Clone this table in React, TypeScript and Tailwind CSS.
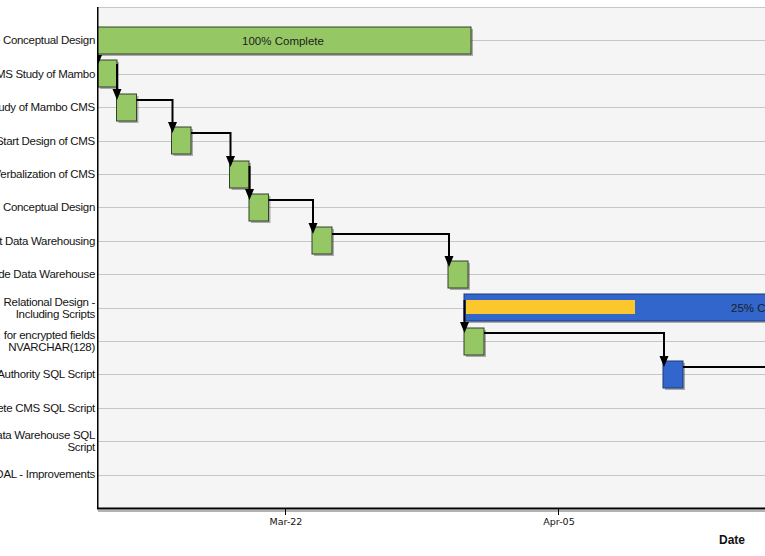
import React from 'react'

// row centres sit on the horizontal gridlines: top 7, pitch 33.4
const TOP = 7
const PITCH = 33.4
const rowY = (i: number) => TOP + PITCH * (i + 1)

const LABELS: string[][] = [
  ['Complete Conceptual Design'],
  ['CMS Study of Mambo'],
  ['Case Study of Mambo CMS'],
  ['Start Design of CMS'],
  ['Verbalization of CMS'],
  ['Finish Conceptual Design'],
  ['Start Data Warehousing'],
  ['Include Data Warehouse'],
  ['Relational Design -', 'Including Scripts'],
  ['for encrypted fields', 'NVARCHAR(128)'],
  ['Create Authority SQL Script'],
  ['Complete CMS SQL Script'],
  ['Create Data Warehouse SQL', 'Script'],
  ['Build DAL - Improvements'],
]

type Task = { row: number; x: number; w: number; color: 'green' | 'blue' }

const TASKS: Task[] = [
  { row: 0, x: 97.5, w: 373.5, color: 'green' },
  { row: 1, x: 98, w: 19, color: 'green' },
  { row: 2, x: 116.5, w: 20, color: 'green' },
  { row: 3, x: 171.5, w: 19.5, color: 'green' },
  { row: 4, x: 229.5, w: 19.5, color: 'green' },
  { row: 5, x: 249, w: 19.5, color: 'green' },
  { row: 6, x: 312, w: 20, color: 'green' },
  { row: 7, x: 448, w: 20, color: 'green' },
  { row: 8, x: 464, w: 640, color: 'blue' },
  { row: 9, x: 464, w: 20, color: 'green' },
  { row: 10, x: 663, w: 20, color: 'blue' },
]

const FILL = { green: '#95c865', blue: '#3366cc' }
const EDGE = { green: '#34412b', blue: '#1f3a78' }

// finish-to-start links: [from x, line y, to x, tip y]; a vertical-only link has from x == to x
const LINKS: [number, number, number, number][] = [
  [97.5, 54, 97.5, 66],
  [117, 64, 117, 100],
  [136.5, 100, 172.5, 133],
  [191, 133, 230.5, 167],
  [249.5, 166, 249.5, 200],
  [268.5, 200, 313, 234],
  [332, 234, 449, 267],
  [464.5, 300, 464.5, 333],
  [484, 333, 664, 367],
]

function Arrow({ link }: { link: [number, number, number, number] }) {
  const [x1, y1, x2, tip] = link
  const d = x1 === x2 ? `M${x1} ${y1} V${tip - 8}` : `M${x1} ${y1} H${x2} V${tip - 8}`
  return (
    <g>
      <path d={d} fill="none" stroke="#000" strokeWidth={2} />
      <polygon points={`${x2 - 4.5},${tip - 11} ${x2 + 4.5},${tip - 11} ${x2},${tip}`} fill="#000" />
    </g>
  )
}

function GanttPlot() {
  const bottom = TOP + PITCH * 15
  return (
    <svg width={668} height={530} viewBox="97 0 668 530" className="block">
      <rect x={97} y={TOP} width={720} height={bottom - TOP} fill="#f5f5f5" />
      {Array.from({ length: 15 }, (_, k) => (
        <line key={k} x1={97} x2={800} y1={Math.round(TOP + PITCH * k) + 0.5} y2={Math.round(TOP + PITCH * k) + 0.5} stroke="#c6c6c6" strokeWidth={1} />
      ))}

      {TASKS.map((t, i) => {
        const y = Math.round(rowY(t.row) - 13.5)
        return (
          <g key={i}>
            <rect x={t.x + 2} y={y + 2} width={t.w} height={27} fill="#000" opacity={0.3} />
            <rect x={t.x} y={y} width={t.w} height={27} fill={FILL[t.color]} stroke={EDGE[t.color]} strokeWidth={1} />
          </g>
        )
      })}

      {/* progress of the relational design task */}
      <rect x={466} y={300} width={169} height={14} fill="#fcc72c" />

      <text x={283} y={45} textAnchor="middle" fontFamily="'Liberation Sans', Arial, sans-serif" fontSize={11.5} fill="#1d1d1d">
        100% Complete
      </text>
      <text x={731} y={311.5} fontFamily="'Liberation Sans', Arial, sans-serif" fontSize={11.5} fill="#1d1d1d">
        25% Complete
      </text>

      {LINKS.map((l, i) => (
        <Arrow key={i} link={l} />
      ))}
      <path d="M683 367 H800" fill="none" stroke="#000" strokeWidth={2} />

      {/* axes */}
      <line x1={98} x2={800} y1={511} y2={511} stroke="#9a9a9a" strokeWidth={1.5} />
      <line x1={97.75} x2={97.75} y1={TOP} y2={509} stroke="#000" strokeWidth={1.5} />
      <line x1={97} x2={800} y1={508.5} y2={508.5} stroke="#000" strokeWidth={2} />
      <line x1={285.5} x2={285.5} y1={509} y2={515} stroke="#000" strokeWidth={1} />
      <line x1={558.5} x2={558.5} y1={509} y2={515} stroke="#000" strokeWidth={1} />
      <text x={286} y={525} textAnchor="middle" fontFamily="'DejaVu Sans', Verdana, sans-serif" fontSize={9.5} fill="#111">
        Mar-22
      </text>
      <text x={559} y={525} textAnchor="middle" fontFamily="'DejaVu Sans', Verdana, sans-serif" fontSize={9.5} fill="#111">
        Apr-05
      </text>
    </svg>
  )
}

export default function App() {
  return (
    <div className="w-[765px] h-[556px] overflow-hidden bg-white flex">
      <div className="w-[97px] shrink-0 flex flex-col pt-[23.7px] font-['Liberation_Sans',Arial,sans-serif] text-[11.5px] leading-[12px] tracking-[-0.3px] text-[#141414]">
        {LABELS.map((lines, i) => (
          <div key={i} className="h-[33.4px] shrink-0 flex flex-col items-end justify-center pr-[2px] whitespace-nowrap text-right">
            {lines.map((l, j) => (
              <span key={j}>{l}</span>
            ))}
          </div>
        ))}
      </div>
      <div className="flex flex-col shrink-0">
        <GanttPlot />
        <div className="flex justify-end pr-[20px] pt-[3px]">
          <span className="font-['Liberation_Sans',Arial,sans-serif] text-[12px] leading-[14px] font-bold text-[#111]">Date</span>
        </div>
      </div>
    </div>
  )
}
